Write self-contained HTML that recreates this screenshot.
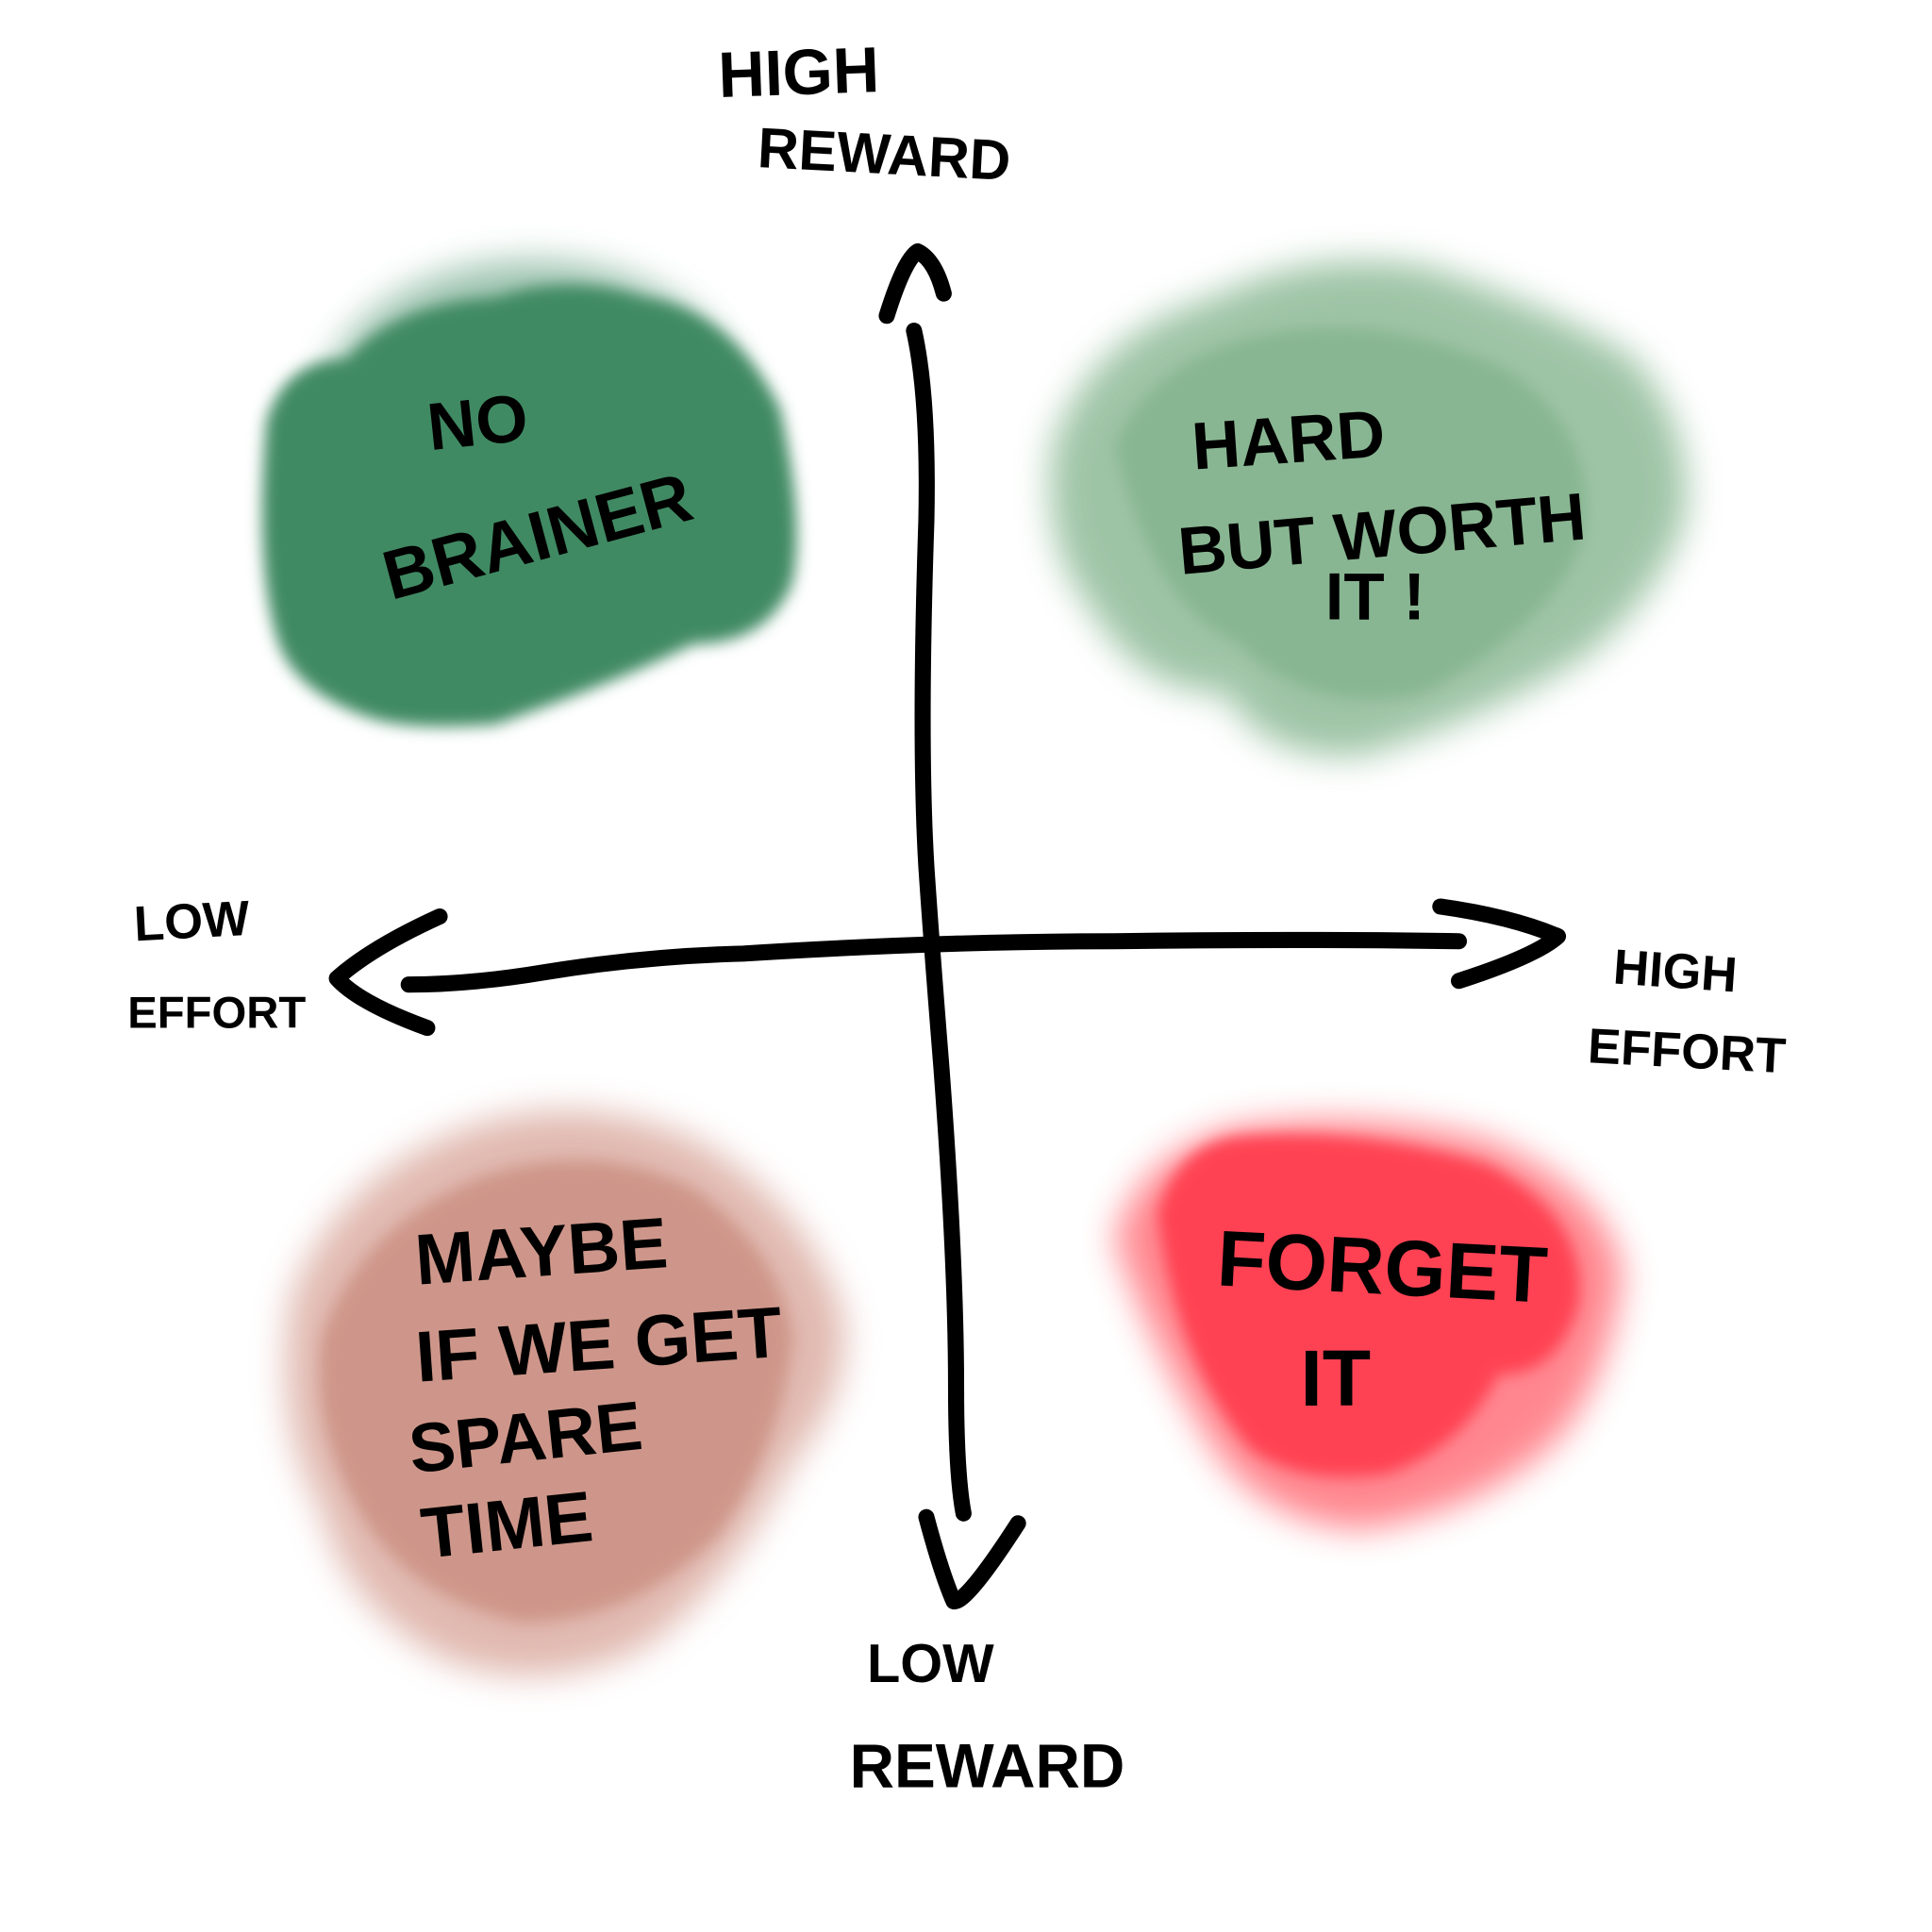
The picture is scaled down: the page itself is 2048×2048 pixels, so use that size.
<!DOCTYPE html>
<html><head><meta charset="utf-8"><style>
html,body{margin:0;padding:0;background:#fff}
svg{display:block}
text{font-family:"Liberation Sans",sans-serif;font-weight:bold;fill:#000}
</style></head><body>
<svg width="2048" height="2048" viewBox="0 0 1560 1560" xmlns="http://www.w3.org/2000/svg">
<defs>
<filter id="b" x="-20%" y="-20%" width="140%" height="140%"><feGaussianBlur stdDeviation="6"/></filter>
<filter id="b2" x="-20%" y="-20%" width="140%" height="140%"><feGaussianBlur stdDeviation="14"/></filter>
</defs>
<rect width="1560" height="1560" fill="#fff"/>
<g filter="url(#b2)" opacity="0.5">
<ellipse cx="430" cy="330" rx="170" ry="120" fill="#418a64"/>
</g>
<g filter="url(#b)" fill="#418a64">
<path d="M215 340 Q230 290 280 290 Q320 245 400 240 Q460 220 520 240 Q590 250 630 330 Q650 420 640 470 Q620 520 560 520 Q500 550 400 585 Q330 590 300 580 Q240 560 225 520 Q205 460 215 340Z"/>
</g>
<g filter="url(#b2)" fill="#86b690" opacity="0.8">
<path d="M850 360 Q880 270 980 240 Q1060 200 1150 215 Q1260 250 1320 290 Q1370 350 1360 420 Q1340 480 1280 530 Q1200 580 1100 610 Q1020 615 990 560 Q920 560 880 490 Q840 440 850 360Z"/>
</g>
<g filter="url(#b)" fill="#7aad85" opacity="0.6">
<path d="M900 360 Q930 290 1020 270 Q1120 250 1220 300 Q1290 350 1280 430 Q1260 500 1150 560 Q1060 580 1000 520 Q930 490 900 360Z"/>
</g>
<g filter="url(#b2)" fill="#d9a79c" opacity="0.8">
<path d="M235 1050 Q270 950 380 910 Q470 880 560 920 Q650 970 680 1060 Q690 1120 640 1180 Q590 1280 520 1330 Q440 1370 360 1340 Q280 1300 260 1220 Q220 1150 235 1050Z"/>
</g>
<g filter="url(#b)" fill="#c98b7e" opacity="0.75">
<path d="M260 1080 Q290 990 390 950 Q480 920 560 960 Q630 1010 640 1080 Q630 1170 580 1240 Q510 1310 420 1310 Q330 1290 290 1220 Q250 1150 260 1080Z"/>
</g>
<g filter="url(#b2)" fill="#ff7a83" opacity="0.9">
<path d="M900 1000 Q920 930 1000 910 Q1100 895 1200 920 Q1300 960 1310 1030 Q1300 1110 1260 1160 Q1200 1220 1100 1235 Q1020 1230 980 1170 Q930 1090 900 1000Z"/>
</g>
<g filter="url(#b)" fill="#ff4352">
<path d="M935 980 Q950 925 1000 918 Q1100 910 1200 940 Q1280 980 1275 1050 Q1260 1110 1210 1110 Q1180 1170 1120 1190 Q1050 1200 1010 1170 Q950 1100 935 980Z"/>
</g>
<g fill="none" stroke="#000" stroke-width="13" stroke-linecap="round" stroke-linejoin="round">
<path d="M738 267 Q750 320 748 420 Q742 600 748 700 Q752 760 760 860 Q772 1020 772 1120 Q772 1190 778 1222"/>
<path d="M716 255 Q730 210 741 203 Q755 210 762 237"/>
<path d="M748 1225 Q760 1270 770 1293 Q780 1295 822 1230"/>
<path d="M330 795 Q380 795 440 785 Q520 772 600 770 Q760 760 900 760 Q1050 758 1178 760"/>
<path d="M355 740 Q300 765 272 790 Q290 810 345 830"/>
<path d="M1163 732 Q1220 740 1258 756 Q1240 772 1178 792"/>
</g>
<text x="580" y="76" font-size="52" transform="rotate(-2 650 60)">HIGH</text>
<text x="612" y="140" font-size="46" transform="rotate(3 710 120)">REWARD</text>
<text x="108" y="757" font-size="40" transform="rotate(-3 160 740)">LOW</text>
<text x="103" y="830" font-size="36">EFFORT</text>
<text x="1303" y="798" font-size="40" transform="rotate(4 1360 780)">HIGH</text>
<text x="1282" y="862" font-size="40" transform="rotate(3 1360 850)">EFFORT</text>
<text x="700" y="1358" font-size="44">LOW</text>
<text x="686" y="1443" font-size="50">REWARD</text>
<text x="345" y="360" font-size="54" transform="rotate(-6 380 340)">NO</text>
<text x="300" y="455" font-size="56" transform="rotate(-15 420 410)">BRAINER</text>
<text x="962" y="373" font-size="54" transform="rotate(-4 1050 350)">HARD</text>
<text x="950" y="450" font-size="54" transform="rotate(-5 1110 420)">BUT WORTH</text>
<text x="1070" y="500" font-size="54">IT !</text>
<text x="335" y="1030" font-size="58" transform="rotate(-4 440 1010)">MAYBE</text>
<text x="335" y="1105" font-size="58" transform="rotate(-4 490 1080)">IF WE GET</text>
<text x="330" y="1178" font-size="56" transform="rotate(-6 440 1160)">SPARE</text>
<text x="340" y="1250" font-size="58" transform="rotate(-6 420 1230)">TIME</text>
<text x="983" y="1045" font-size="64" transform="rotate(3 1120 1020)">FORGET</text>
<text x="1050" y="1135" font-size="64">IT</text>
</svg>
</body></html>
